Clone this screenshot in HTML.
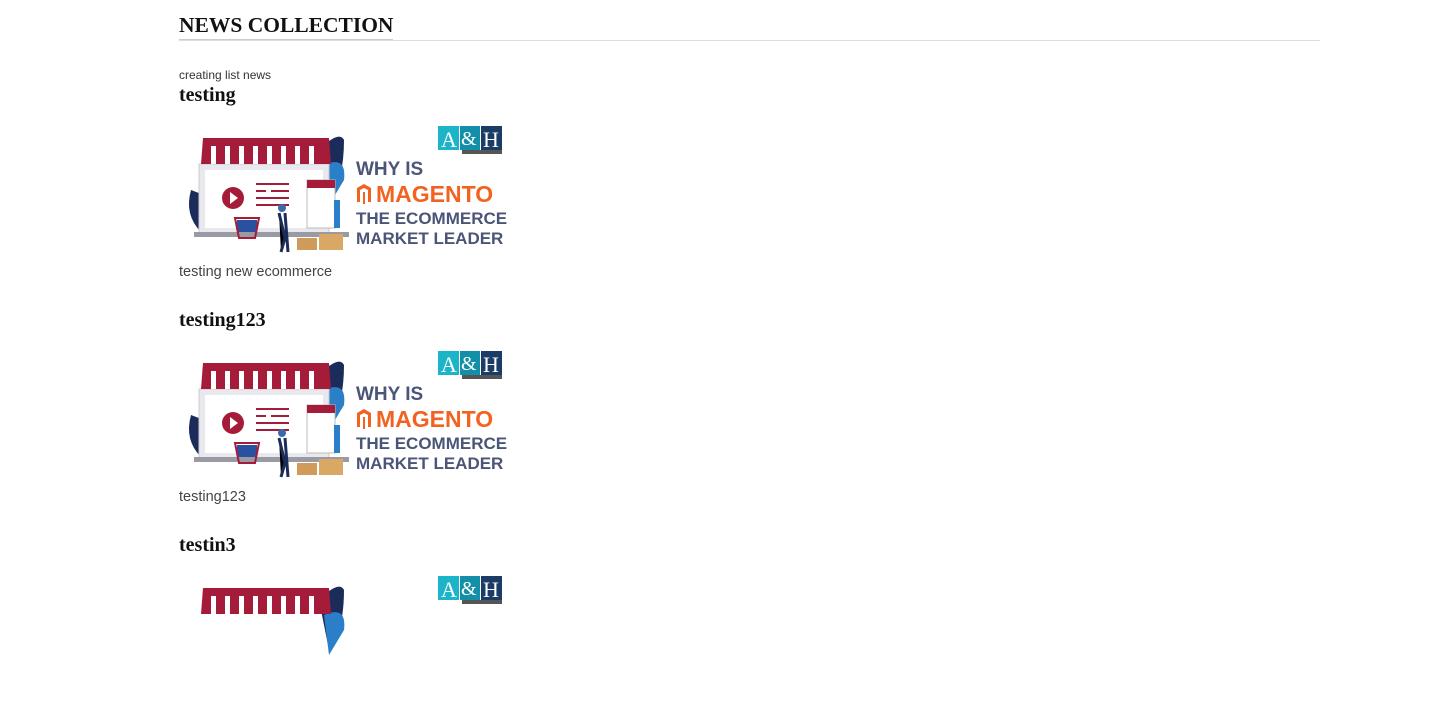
<!DOCTYPE html>
<html><head><meta charset="utf-8"><style>
body{margin:0;background:#fff;width:1432px;height:607px;overflow:hidden;position:relative;font-family:"Liberation Sans",sans-serif}
.h1{position:absolute;left:179px;top:11px;font:bold 21.5px "Liberation Serif",serif;color:#111;border-bottom:2px solid #ccc;line-height:28px}
.rule{position:absolute;left:179px;top:40px;width:1141px;height:1px;background:#ddd}
.sub{position:absolute;left:179px;top:68px;font-size:12px;color:#333}
.t{position:absolute;left:179px;font:bold 20px "Liberation Serif",serif;color:#111}
.d{position:absolute;left:179px;font-size:14.5px;color:#444}
svg.im{position:absolute;left:179px}
</style></head><body>
<div class="h1">NEWS COLLECTION</div>
<div class="rule"></div>
<div class="sub">creating list news</div>

<div class="t" style="top:84px">testing</div>
<svg class="im" style="top:120px" width="330" height="135" viewBox="0 0 330 135">
<path d="M140 30 Q160 10 165 20 Q165 60 150 80Z" fill="#1c2c5a"/><path d="M145 45 Q168 35 165 60 L150 85Z" fill="#2a7fc8"/>
<path d="M12 70 Q5 95 22 112 L25 75Z" fill="#1c2c5a"/>
<rect x="20" y="44" width="130" height="70" fill="#e8e8ee" stroke="#ccc"/>
<rect x="26" y="50" width="118" height="58" fill="#fff"/>
<path d="M24 18 L150 18 L152 44 L22 44Z" fill="#a51c3a"/>
<g fill="#fff"><rect x="32" y="26" width="5" height="18"/><rect x="46" y="26" width="5" height="18"/><rect x="60" y="26" width="5" height="18"/><rect x="74" y="26" width="5" height="18"/><rect x="88" y="26" width="5" height="18"/><rect x="102" y="26" width="5" height="18"/><rect x="116" y="26" width="5" height="18"/><rect x="130" y="26" width="5" height="18"/></g>
<circle cx="54" cy="78" r="11" fill="#a51c3a"/><path d="M51 72 L59 78 L51 84Z" fill="#fff"/>
<g fill="#a51c3a"><rect x="77" y="63" width="33" height="2"/><rect x="77" y="70" width="10" height="2"/><rect x="92" y="70" width="18" height="2"/><rect x="77" y="77" width="33" height="2"/><rect x="77" y="84" width="33" height="2"/></g>
<rect x="128" y="60" width="28" height="48" fill="#fff" stroke="#bbb"/><rect x="128" y="60" width="28" height="8" fill="#a51c3a"/>
<rect x="15" y="112" width="155" height="5" fill="#9a9aa4"/>
<path d="M100 93 L106 118 L102 132 M106 93 L109 132" stroke="#1c2c5a" stroke-width="3"/><circle cx="103" cy="88" r="4" fill="#3a6aa8"/>
<rect x="58" y="100" width="20" height="12" fill="#2a50a0"/><path d="M56 98 L80 98 L76 118 L60 118Z" fill="none" stroke="#a51c3a" stroke-width="2"/>
<rect x="155" y="80" width="6" height="28" fill="#2a7fc8"/>
<rect x="118" y="118" width="20" height="12" fill="#d09a5a"/><rect x="140" y="114" width="24" height="16" fill="#d9a865"/>
<rect x="259" y="6" width="21" height="24" fill="#1bb4c8"/><rect x="281" y="6" width="20" height="24" fill="#138fa8"/><rect x="302" y="6" width="21" height="24" fill="#1c3c68"/>
<text x="262" y="27" font-family="Liberation Serif" font-size="22" fill="#fff">A</text><text x="282" y="25" font-family="Liberation Serif" font-size="20" fill="#fff">&amp;</text><text x="304" y="27" font-family="Liberation Serif" font-size="22" fill="#fff">H</text>
<rect x="283" y="30" width="40" height="4" fill="#555"/>
<g font-family="Liberation Sans" font-weight="bold" fill="#4a5577">
<text x="177" y="55" font-size="19">WHY IS</text>
<path d="M178 82 L178 68 L185 64 L192 68 L192 82 L189 82 L189 70 L185 68 L181 70 L181 82Z M184 72 L186 72 L186 84 L184 84Z" fill="#f26322"/>
<text x="197" y="82" font-size="23" fill="#f26322">MAGENTO</text>
<text x="177" y="104" font-size="17">THE ECOMMERCE</text>
<text x="177" y="124" font-size="17">MARKET LEADER</text></g>
</svg>
<div class="d" style="top:264px">testing new ecommerce</div>

<div class="t" style="top:309px">testing123</div>
<svg class="im" style="top:345px" width="330" height="135" viewBox="0 0 330 135">
<path d="M140 30 Q160 10 165 20 Q165 60 150 80Z" fill="#1c2c5a"/><path d="M145 45 Q168 35 165 60 L150 85Z" fill="#2a7fc8"/>
<path d="M12 70 Q5 95 22 112 L25 75Z" fill="#1c2c5a"/>
<rect x="20" y="44" width="130" height="70" fill="#e8e8ee" stroke="#ccc"/>
<rect x="26" y="50" width="118" height="58" fill="#fff"/>
<path d="M24 18 L150 18 L152 44 L22 44Z" fill="#a51c3a"/>
<g fill="#fff"><rect x="32" y="26" width="5" height="18"/><rect x="46" y="26" width="5" height="18"/><rect x="60" y="26" width="5" height="18"/><rect x="74" y="26" width="5" height="18"/><rect x="88" y="26" width="5" height="18"/><rect x="102" y="26" width="5" height="18"/><rect x="116" y="26" width="5" height="18"/><rect x="130" y="26" width="5" height="18"/></g>
<circle cx="54" cy="78" r="11" fill="#a51c3a"/><path d="M51 72 L59 78 L51 84Z" fill="#fff"/>
<g fill="#a51c3a"><rect x="77" y="63" width="33" height="2"/><rect x="77" y="70" width="10" height="2"/><rect x="92" y="70" width="18" height="2"/><rect x="77" y="77" width="33" height="2"/><rect x="77" y="84" width="33" height="2"/></g>
<rect x="128" y="60" width="28" height="48" fill="#fff" stroke="#bbb"/><rect x="128" y="60" width="28" height="8" fill="#a51c3a"/>
<rect x="15" y="112" width="155" height="5" fill="#9a9aa4"/>
<path d="M100 93 L106 118 L102 132 M106 93 L109 132" stroke="#1c2c5a" stroke-width="3"/><circle cx="103" cy="88" r="4" fill="#3a6aa8"/>
<rect x="58" y="100" width="20" height="12" fill="#2a50a0"/><path d="M56 98 L80 98 L76 118 L60 118Z" fill="none" stroke="#a51c3a" stroke-width="2"/>
<rect x="155" y="80" width="6" height="28" fill="#2a7fc8"/>
<rect x="118" y="118" width="20" height="12" fill="#d09a5a"/><rect x="140" y="114" width="24" height="16" fill="#d9a865"/>
<rect x="259" y="6" width="21" height="24" fill="#1bb4c8"/><rect x="281" y="6" width="20" height="24" fill="#138fa8"/><rect x="302" y="6" width="21" height="24" fill="#1c3c68"/>
<text x="262" y="27" font-family="Liberation Serif" font-size="22" fill="#fff">A</text><text x="282" y="25" font-family="Liberation Serif" font-size="20" fill="#fff">&amp;</text><text x="304" y="27" font-family="Liberation Serif" font-size="22" fill="#fff">H</text>
<rect x="283" y="30" width="40" height="4" fill="#555"/>
<g font-family="Liberation Sans" font-weight="bold" fill="#4a5577">
<text x="177" y="55" font-size="19">WHY IS</text>
<path d="M178 82 L178 68 L185 64 L192 68 L192 82 L189 82 L189 70 L185 68 L181 70 L181 82Z M184 72 L186 72 L186 84 L184 84Z" fill="#f26322"/>
<text x="197" y="82" font-size="23" fill="#f26322">MAGENTO</text>
<text x="177" y="104" font-size="17">THE ECOMMERCE</text>
<text x="177" y="124" font-size="17">MARKET LEADER</text></g>
</svg>
<div class="d" style="top:489px">testing123</div>

<div class="t" style="top:534px">testin3</div>
<svg class="im" style="top:570px" width="330" height="135" viewBox="0 0 330 135">
<path d="M140 30 Q160 10 165 20 Q165 60 150 80Z" fill="#1c2c5a"/><path d="M145 45 Q168 35 165 60 L150 85Z" fill="#2a7fc8"/>
<path d="M24 18 L150 18 L152 44 L22 44Z" fill="#a51c3a"/>
<g fill="#fff"><rect x="32" y="26" width="5" height="18"/><rect x="46" y="26" width="5" height="18"/><rect x="60" y="26" width="5" height="18"/><rect x="74" y="26" width="5" height="18"/><rect x="88" y="26" width="5" height="18"/><rect x="102" y="26" width="5" height="18"/><rect x="116" y="26" width="5" height="18"/><rect x="130" y="26" width="5" height="18"/></g>
<rect x="259" y="6" width="21" height="24" fill="#1bb4c8"/><rect x="281" y="6" width="20" height="24" fill="#138fa8"/><rect x="302" y="6" width="21" height="24" fill="#1c3c68"/>
<text x="262" y="27" font-family="Liberation Serif" font-size="22" fill="#fff">A</text><text x="282" y="25" font-family="Liberation Serif" font-size="20" fill="#fff">&amp;</text><text x="304" y="27" font-family="Liberation Serif" font-size="22" fill="#fff">H</text>
<rect x="283" y="30" width="40" height="4" fill="#555"/>
</svg>
</body></html>
